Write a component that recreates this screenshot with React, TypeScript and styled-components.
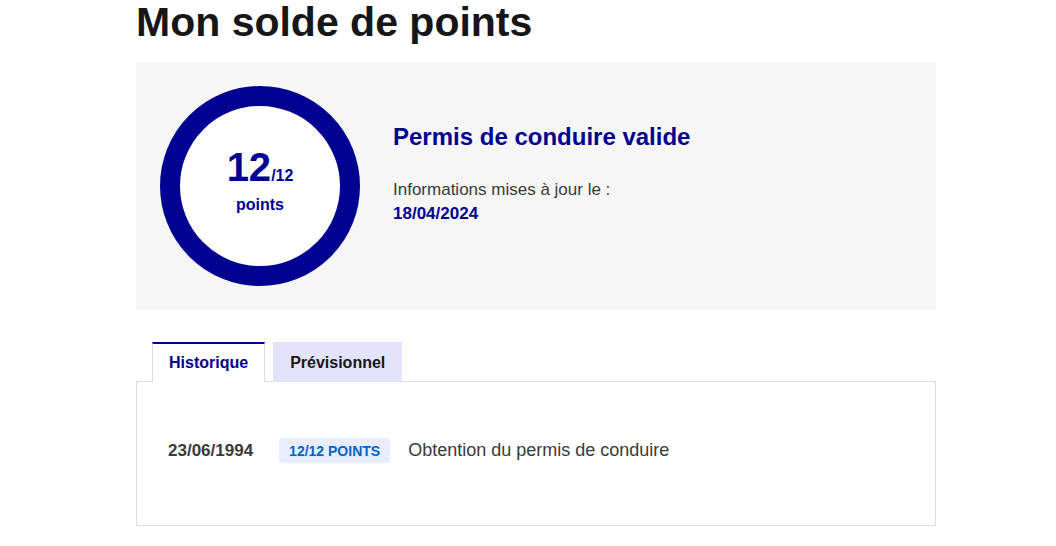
import React from "react";
import styled, { createGlobalStyle } from "styled-components";

const GlobalStyle = createGlobalStyle`
  html, body {
    margin: 0;
    padding: 0;
    background: #ffffff;
  }
  body {
    font-family: "Liberation Sans", Arial, sans-serif;
    color: #161616;
  }
`;

const Page = styled.main`
  width: 800px;
  margin-left: 136px;
`;

const Title = styled.h1`
  margin: 0 0 18px;
  font-size: 41px;
  line-height: 44px;
  font-weight: 700;
  color: #161616;
`;

const BalanceCard = styled.section`
  display: flex;
  align-items: flex-start;
  gap: 33px;
  padding: 24px;
  background: #f6f6f6;
`;

const Ring = styled.div`
  box-sizing: border-box;
  width: 200px;
  height: 200px;
  flex: none;
  border: 20px solid #000091;
  border-radius: 50%;
  background: #ffffff;
  display: flex;
  flex-direction: column;
  align-items: center;
  justify-content: center;
  color: #000091;
  font-weight: 700;
`;

const Score = styled.div`
  display: flex;
  align-items: baseline;
  font-size: 40px;
  line-height: 40px;
  margin-top: -12px;
`;

const ScoreMax = styled.span`
  font-size: 16px;
`;

const ScoreUnit = styled.div`
  font-size: 16px;
  line-height: 18px;
  margin-top: 0;
`;

const Details = styled.div`
  padding-top: 37px;
`;

const Status = styled.h2`
  margin: 0 0 27px;
  font-size: 24px;
  line-height: 28px;
  font-weight: 700;
  color: #000091;
`;

const Info = styled.p`
  margin: 0;
  font-size: 17px;
  line-height: 24px;
  color: #3a3a3a;
`;

const InfoDate = styled.span`
  display: block;
  font-weight: 700;
  color: #000091;
`;

const Tabs = styled.div`
  margin-top: 32px;
`;

const TabList = styled.div`
  display: flex;
  gap: 8px;
  padding-left: 16px;
`;

const Tab = styled.button<{ $active?: boolean }>`
  box-sizing: border-box;
  height: 40px;
  margin-bottom: -1px;
  padding: 0 16px;
  font-family: inherit;
  font-size: 16px;
  font-weight: 700;
  cursor: pointer;
  color: ${(p) => (p.$active ? "#000091" : "#161616")};
  background: ${(p) => (p.$active ? "#ffffff" : "#e3e3fd")};
  border: none;
  border-top: 2px solid ${(p) => (p.$active ? "#000091" : "#e3e3fd")};
  border-left: 1px solid ${(p) => (p.$active ? "#dddddd" : "transparent")};
  border-right: 1px solid ${(p) => (p.$active ? "#dddddd" : "transparent")};
  position: relative;
  z-index: ${(p) => (p.$active ? 1 : 0)};
`;

const Panel = styled.div`
  box-sizing: border-box;
  height: 145px;
  border: 1px solid #dddddd;
  padding: 0 31px 6px;
  display: flex;
  align-items: center;
`;

const HistoryRow = styled.div`
  display: flex;
  align-items: center;
`;

const RowDate = styled.span`
  font-size: 17px;
  font-weight: 700;
  color: #3a3a3a;
  margin-right: 26px;
`;

const Badge = styled.span`
  box-sizing: border-box;
  height: 25px;
  padding: 0 10px;
  display: inline-flex;
  align-items: center;
  border-radius: 4px;
  background: #e8edff;
  color: #0063cb;
  font-size: 14px;
  font-weight: 700;
  text-transform: uppercase;
  margin-right: 18px;
`;

const RowLabel = styled.span`
  font-size: 18px;
  color: #3a3a3a;
`;

export default function App() {
  return (
    <>
      <GlobalStyle />
      <Page>
        <Title>Mon solde de points</Title>
        <BalanceCard>
          <Ring>
            <Score>
              12<ScoreMax>/12</ScoreMax>
            </Score>
            <ScoreUnit>points</ScoreUnit>
          </Ring>
          <Details>
            <Status>Permis de conduire valide</Status>
            <Info>
              Informations mises à jour le :
              <InfoDate>18/04/2024</InfoDate>
            </Info>
          </Details>
        </BalanceCard>
        <Tabs>
          <TabList>
            <Tab $active>Historique</Tab>
            <Tab>Prévisionnel</Tab>
          </TabList>
          <Panel>
            <HistoryRow>
              <RowDate>23/06/1994</RowDate>
              <Badge>12/12 points</Badge>
              <RowLabel>Obtention du permis de conduire</RowLabel>
            </HistoryRow>
          </Panel>
        </Tabs>
      </Page>
    </>
  );
}
